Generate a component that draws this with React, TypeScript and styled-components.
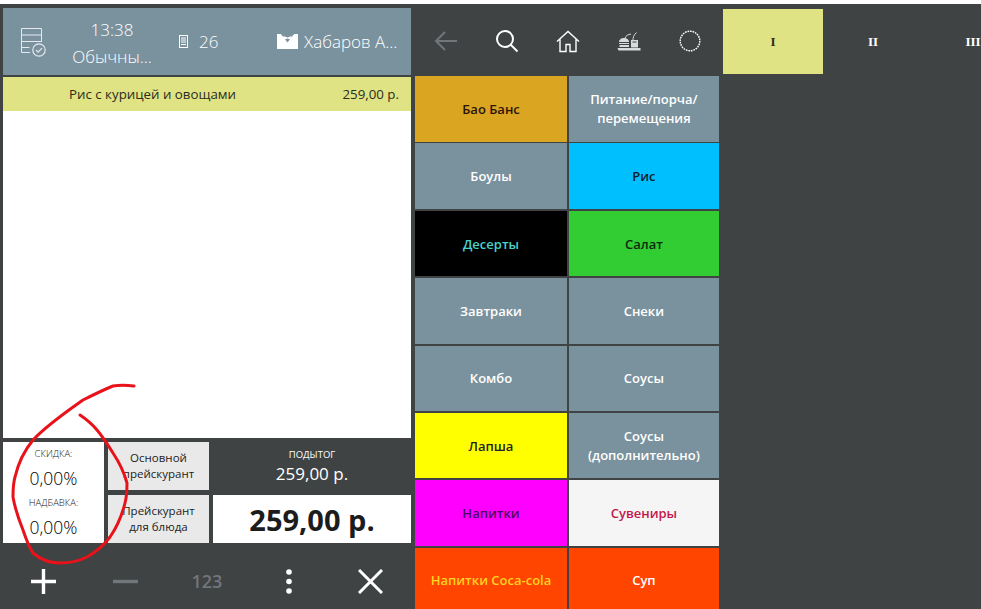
import React from "react";
import styled, { createGlobalStyle } from "styled-components";

const Global = createGlobalStyle`
  html, body { margin: 0; padding: 0; background: #fff; overflow: hidden; }
  body { font-family: "Open Sans", "Noto Sans", sans-serif; }
`;

const Page = styled.div`
  position: relative;
  display: flex;
  width: 981px;
  height: 605px;
  margin-top: 4px;
  overflow: hidden;
  background: #3f4344;
`;

const LeftPanel = styled.div`
  display: flex;
  flex-direction: column;
  width: 408px;
  margin-left: 3px;
  padding-top: 4px;
  flex: none;
`;

const Header = styled.div`
  display: flex;
  align-items: center;
  height: 67px;
  background: #7a919e;
  color: #fff;
  font-weight: 300;
  font-size: 17px;
  flex: none;
`;

const HeaderIcon = styled.div`
  display: flex;
  margin-left: 17px;
  width: 27px;
`;

const Shift = styled.div`
  display: flex;
  flex-direction: column;
  align-items: center;
  width: 100px;
  margin-left: 15px;
  padding-top: 3px;
  line-height: 27px;
`;

const Orders = styled.div`
  display: flex;
  align-items: center;
  gap: 11px;
  margin-left: 17px;
  width: 98px;
`;

const Waiter = styled.div`
  display: flex;
  align-items: center;
  gap: 6px;
  white-space: nowrap;
`;

const OrderRow = styled.div`
  display: flex;
  justify-content: space-between;
  align-items: center;
  height: 34px;
  margin-top: 2px;
  padding: 0 12px 0 66px;
  background: #dfe384;
  color: #2c2c20;
  font-size: 13.3px;
  flex: none;
`;

const OrderList = styled.div`
  flex: 1;
  background: #fff;
`;

const Summary = styled.div`
  display: grid;
  grid-template-columns: 101px 101px 198px;
  grid-template-rows: 48px 48px;
  column-gap: 4px;
  row-gap: 5px;
  padding-top: 4px;
  flex: none;
`;

const Adjustments = styled.div`
  grid-row: 1 / span 2;
  display: flex;
  flex-direction: column;
  align-items: center;
  background: #fff;
  padding-top: 5px;
`;

const AdjustLabel = styled.div`
  font-size: 9.5px;
  line-height: 14px;
  font-weight: 300;
  color: #222;
`;

const AdjustValue = styled.div`
  font-size: 17.5px;
  line-height: 25px;
  font-weight: 300;
  margin: 5px 0 5px;
  color: #000;
`;

const PriceButton = styled.div`
  display: flex;
  align-items: center;
  justify-content: center;
  text-align: center;
  background: #e9e9e9;
  color: #222;
  font-size: 11.5px;
  line-height: 16.5px;
  font-weight: 500;
`;

const Subtotal = styled.div`
  display: flex;
  flex-direction: column;
  align-items: center;
  color: #fff;
`;

const SubtotalLabel = styled.div`
  font-size: 9.5px;
  line-height: 14px;
  margin-top: 6px;
  font-weight: 400;
`;

const SubtotalValue = styled.div`
  font-size: 17px;
  line-height: 24px;
  font-weight: 400;
`;

const Total = styled.div`
  display: flex;
  align-items: center;
  justify-content: center;
  background: #fff;
  color: #1c1c1c;
  font-size: 29px;
  font-weight: 700;
`;

const Toolbar = styled.div`
  box-sizing: border-box;
  display: flex;
  align-items: center;
  justify-content: space-around;
  height: 66px;
  padding-top: 10px;
  flex: none;
`;

const ToolSlot = styled.div`
  display: flex;
  align-items: center;
  justify-content: center;
  width: 81.6px;
  font-size: 18px;
  font-weight: 600;
  color: #71767a;
`;

const RightPanel = styled.div`
  display: flex;
  flex-direction: column;
  flex: 1;
  padding-left: 4px;
`;

const TopBar = styled.div`
  display: flex;
  align-items: flex-start;
  height: 72px;
  flex: none;
`;

const NavButton = styled.div`
  display: flex;
  align-items: center;
  justify-content: center;
  width: 61px;
  height: 74px;
`;

const Tabs = styled.div`
  display: flex;
  margin-left: 3px;
`;

const Tab = styled.div<{ $active?: boolean }>`
  display: flex;
  align-items: center;
  justify-content: center;
  width: 100px;
  height: 65px;
  margin-top: 5px;
  background: ${({ $active }) => ($active ? "#dfe384" : "transparent")};
  color: ${({ $active }) => ($active ? "#2c2c20" : "#fff")};
  font-family: "Liberation Serif", serif;
  font-weight: 700;
  font-size: 13px;
  flex: none;
`;

const TileGrid = styled.div`
  display: grid;
  grid-template-columns: 152px 150px;
  grid-auto-rows: 65.5px;
  gap: 1.9px;
  width: 304px;
`;

const Tile = styled.div<{ $bg: string; $fg: string }>`
  display: flex;
  align-items: center;
  justify-content: center;
  padding-top: 1px;
  text-align: center;
  background: ${({ $bg }) => $bg};
  color: ${({ $fg }) => $fg};
  font-size: 13px;
  line-height: 19px;
  font-weight: 600;
  white-space: pre-line;
`;

const Annotation = styled.svg`
  position: absolute;
  left: 0;
  top: 376px;
  pointer-events: none;
`;

const slate = "#7a919e";
const tiles = [
  { name: "Бао Банс", bg: "#daa520", fg: "#2b1408" },
  { name: "Питание/порча/\nперемещения", bg: slate, fg: "#fff" },
  { name: "Боулы", bg: slate, fg: "#fff" },
  { name: "Рис", bg: "#00bfff", fg: "#10202a" },
  { name: "Десерты", bg: "#000", fg: "#48d1cc" },
  { name: "Салат", bg: "#32cd32", fg: "#0d2a0d" },
  { name: "Завтраки", bg: slate, fg: "#fff" },
  { name: "Снеки", bg: slate, fg: "#fff" },
  { name: "Комбо", bg: slate, fg: "#fff" },
  { name: "Соусы", bg: slate, fg: "#fff" },
  { name: "Лапша", bg: "#ffff00", fg: "#222" },
  { name: "Соусы\n(дополнительно)", bg: slate, fg: "#fff" },
  { name: "Напитки", bg: "#ff00ff", fg: "#4b0a5e" },
  { name: "Сувениры", bg: "#f5f5f5", fg: "#c2174b" },
  { name: "Напитки Coca-cola", bg: "#ff4500", fg: "#ffd21e" },
  { name: "Суп", bg: "#ff4500", fg: "#fff" },
];

const TableIcon = () => (
  <svg width="27" height="30" viewBox="0 0 27 30" fill="none" stroke="#e4eaed" strokeWidth="1">
    <path d="M10 25.5H1.5V1.5h20V15" />
    <path d="M1.5 8h20M1.5 14.5h20M1.5 20.5h8" />
    <circle cx="19" cy="23" r="6.2" strokeWidth="1.2" />
    <path d="M16 23l2.2 2.2 3.8-4" strokeWidth="1.2" />
  </svg>
);

const DocIcon = () => (
  <svg width="9" height="13" viewBox="0 0 9 13" fill="none" stroke="#fff" strokeWidth="1">
    <rect x="0.5" y="0.5" width="8" height="12" />
    <path d="M2 3h5M2 5h5M2 7h5M2 9.5h5" />
  </svg>
);

const ShirtIcon = () => (
  <svg width="21" height="15" viewBox="0 0 21 15">
    <path fill="#fff" d="M0 0h4l6.5 5L17 0h4v15H0z" />
    <path fill="#7a919e" d="M4 0h13l-6.5 8.5z" />
    <path fill="#fff" d="M6.5 2l4 1.6 4-1.6v4l-4-1.6-4 1.6z" />
  </svg>
);

const BackIcon = () => (
  <svg width="24" height="20" viewBox="0 0 24 20" fill="none" stroke="#71767a" strokeWidth="2">
    <path d="M23 10H2M11 1l-9 9 9 9" />
  </svg>
);

const SearchIcon = () => (
  <svg width="24" height="24" viewBox="0 0 24 24" fill="none" stroke="#fff" strokeWidth="2">
    <circle cx="10" cy="10" r="8" />
    <path d="M15.5 15.5l7 7" />
  </svg>
);

const HomeIcon = () => (
  <svg width="24" height="23" viewBox="0 0 24 23" fill="none" stroke="#fff" strokeWidth="1.4">
    <path d="M1 11.5L12 1.5l11 10M4 9v12.5h6v-7h4v7h6V9" />
  </svg>
);

const FoodIcon = () => (
  <svg width="24" height="19" viewBox="0 0 24 19" fill="#d8dbdc">
    <path d="M0.5 16h23v2.5H1.5z" />
    <path d="M2 10c0-2.5 2.5-4 5-4s5 1.500 5 4z" />
    <path d="M2 11h10v1H2zM2.500 13h9.500v2H2.500z" />
    <path d="M14 8h7v7.500h-7z" />
    <path d="M16 8c0-2 .5-5 3.500-7.500" fill="none" stroke="#d8dbdc" strokeWidth="1" />
    <path d="M8 6c1-2.500 3-3.500 6-4" fill="none" stroke="#d8dbdc" strokeWidth="1" />
    <path d="M15.500 10h4" stroke="#3f4344" strokeWidth="1" />
  </svg>
);

const RingIcon = () => (
  <svg width="22" height="22" viewBox="0 0 22 22" fill="none" stroke="#fff" strokeWidth="1.4">
    <circle cx="11" cy="11" r="9.800" strokeDasharray="1.7 0.85" />
  </svg>
);

const PlusIcon = () => (
  <svg width="25" height="25" viewBox="0 0 25 25" stroke="#fff" strokeWidth="3.4">
    <path d="M0 12.5h25M12.5 0v25" />
  </svg>
);

const MinusIcon = () => (
  <svg width="25" height="25" viewBox="0 0 25 25" stroke="#71767a" strokeWidth="3.4">
    <path d="M0 12.5h25" />
  </svg>
);

const DotsIcon = () => (
  <svg width="6" height="25" viewBox="0 0 6 25" fill="#fff">
    <circle cx="3" cy="3" r="2.8" />
    <circle cx="3" cy="12.5" r="2.8" />
    <circle cx="3" cy="22" r="2.8" />
  </svg>
);

const CloseIcon = () => (
  <svg width="25" height="25" viewBox="0 0 25 25" stroke="#fff" strokeWidth="3">
    <path d="M1 1l23 23M24 1L1 24" />
  </svg>
);

const App: React.FC = () => {
  return (
    <Page>
      <Global />
      <LeftPanel>
        <Header>
          <HeaderIcon>
            <TableIcon />
          </HeaderIcon>
          <Shift>
            <div>13:38</div>
            <div>Обычны...</div>
          </Shift>
          <Orders>
            <DocIcon />
            <span>26</span>
          </Orders>
          <Waiter>
            <ShirtIcon />
            <span>Хабаров А...</span>
          </Waiter>
        </Header>
        <OrderRow>
          <span>Рис с курицей и овощами</span>
          <span>259,00 р.</span>
        </OrderRow>
        <OrderList />
        <Summary>
          <Adjustments>
            <AdjustLabel>СКИДКА:</AdjustLabel>
            <AdjustValue>0,00%</AdjustValue>
            <AdjustLabel>НАДБАВКА:</AdjustLabel>
            <AdjustValue>0,00%</AdjustValue>
          </Adjustments>
          <PriceButton>
            Основной
            <br />
            прейскурант
          </PriceButton>
          <Subtotal>
            <SubtotalLabel>ПОДЫТОГ</SubtotalLabel>
            <SubtotalValue>259,00 р.</SubtotalValue>
          </Subtotal>
          <PriceButton>
            Прейскурант
            <br />
            для блюда
          </PriceButton>
          <Total>259,00 р.</Total>
        </Summary>
        <Toolbar>
          <ToolSlot>
            <PlusIcon />
          </ToolSlot>
          <ToolSlot>
            <MinusIcon />
          </ToolSlot>
          <ToolSlot>123</ToolSlot>
          <ToolSlot>
            <DotsIcon />
          </ToolSlot>
          <ToolSlot>
            <CloseIcon />
          </ToolSlot>
        </Toolbar>
      </LeftPanel>
      <RightPanel>
        <TopBar>
          <NavButton>
            <BackIcon />
          </NavButton>
          <NavButton>
            <SearchIcon />
          </NavButton>
          <NavButton>
            <HomeIcon />
          </NavButton>
          <NavButton>
            <FoodIcon />
          </NavButton>
          <NavButton>
            <RingIcon />
          </NavButton>
          <Tabs>
            <Tab $active>I</Tab>
            <Tab>II</Tab>
            <Tab>III</Tab>
          </Tabs>
        </TopBar>
        <TileGrid>
          {tiles.map((t) => (
            <Tile key={t.name} $bg={t.bg} $fg={t.fg}>
              {t.name}
            </Tile>
          ))}
        </TileGrid>
      </RightPanel>
      <Annotation width="200" height="200" viewBox="0 380 200 200">
        <path
          d="M134 386C126 385 119 385 113 386C103 390 93 395 83 400C66 412 47 425 33 440C24 451 18 464 15 477C13 484 13 490 13 497C15 509 19 520 23 530C26 539 29 547 33 553C41 560 50 563 60 563C70 563 79 561 87 557C96 552 104 545 110 537C117 527 122 515 125 503C127 496 127 490 127 483C124 472 119 462 113 453C108 445 103 437 97 430C92 424 86 419 80 415"
          fill="none"
          stroke="#e8131a"
          strokeWidth="3"
          strokeLinecap="round"
          strokeLinejoin="round"
        />
      </Annotation>
    </Page>
  );
};

export default App;
